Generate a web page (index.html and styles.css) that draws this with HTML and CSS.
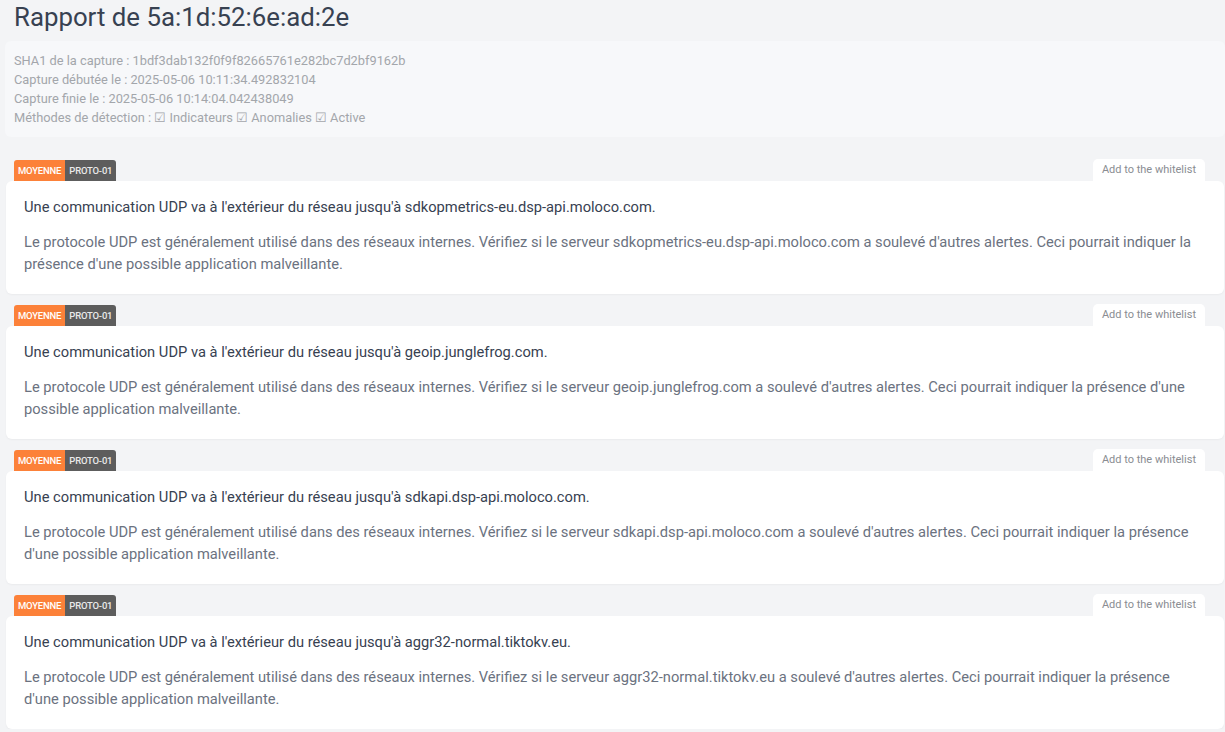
FILE: index.html
```html
<!DOCTYPE html>
<html lang="fr">
<head>
<meta charset="utf-8">
<title>Rapport</title>
<link rel="stylesheet" href="styles.css">
</head>
<body>
<div class="page">
  <h1 class="title">Rapport de 5a:1d:52:6e:ad:2e</h1>
  <div class="info">
    <div>SHA1 de la capture : 1bdf3dab132f0f9f82665761e282bc7d2bf9162b</div>
    <div>Capture débutée le : 2025-05-06 10:11:34.492832104</div>
    <div>Capture finie le : 2025-05-06 10:14:04.042438049</div>
    <div>Méthodes de détection : ☑ Indicateurs ☑ Anomalies ☑ Active</div>
  </div>

  <div class="alert">
    <div class="alert-head">
      <div class="tags"><span class="tag tag-level">MOYENNE</span><span class="tag tag-id">PROTO-01</span></div>
      <button class="wl">Add to the whitelist</button>
    </div>
    <div class="card">
      <p class="card-title">Une communication UDP va à l'extérieur du réseau jusqu'à sdkopmetrics-eu.dsp-api.moloco.com.</p>
      <p class="card-desc">Le protocole UDP est généralement utilisé dans des réseaux internes. Vérifiez si le serveur sdkopmetrics-eu.dsp-api.moloco.com a soulevé d'autres alertes. Ceci pourrait indiquer la présence d'une possible application malveillante.</p>
    </div>
  </div>

  <div class="alert">
    <div class="alert-head">
      <div class="tags"><span class="tag tag-level">MOYENNE</span><span class="tag tag-id">PROTO-01</span></div>
      <button class="wl">Add to the whitelist</button>
    </div>
    <div class="card">
      <p class="card-title">Une communication UDP va à l'extérieur du réseau jusqu'à geoip.junglefrog.com.</p>
      <p class="card-desc">Le protocole UDP est généralement utilisé dans des réseaux internes. Vérifiez si le serveur geoip.junglefrog.com a soulevé d'autres alertes. Ceci pourrait indiquer la présence d'une possible application malveillante.</p>
    </div>
  </div>

  <div class="alert">
    <div class="alert-head">
      <div class="tags"><span class="tag tag-level">MOYENNE</span><span class="tag tag-id">PROTO-01</span></div>
      <button class="wl">Add to the whitelist</button>
    </div>
    <div class="card">
      <p class="card-title">Une communication UDP va à l'extérieur du réseau jusqu'à sdkapi.dsp-api.moloco.com.</p>
      <p class="card-desc">Le protocole UDP est généralement utilisé dans des réseaux internes. Vérifiez si le serveur sdkapi.dsp-api.moloco.com a soulevé d'autres alertes. Ceci pourrait indiquer la présence d'une possible application malveillante.</p>
    </div>
  </div>

  <div class="alert">
    <div class="alert-head">
      <div class="tags"><span class="tag tag-level">MOYENNE</span><span class="tag tag-id">PROTO-01</span></div>
      <button class="wl">Add to the whitelist</button>
    </div>
    <div class="card">
      <p class="card-title">Une communication UDP va à l'extérieur du réseau jusqu'à aggr32-normal.tiktokv.eu.</p>
      <p class="card-desc">Le protocole UDP est généralement utilisé dans des réseaux internes. Vérifiez si le serveur aggr32-normal.tiktokv.eu a soulevé d'autres alertes. Ceci pourrait indiquer la présence d'une possible application malveillante.</p>
    </div>
  </div>
</div>
</body>
</html>
```

FILE: styles.css
```css
html, body {
  margin: 0;
  padding: 0;
  background: #f3f4f6;
  font-family: Roboto, "Liberation Sans", sans-serif;
}

.page {
  padding: 0 1px 0 6px;
}

.title {
  margin: 0;
  padding: 2px 0 0 8px;
  height: 39px;
  font-size: 25.8px;
  font-weight: 400;
  line-height: 30px;
  color: #374151;
}

.info {
  margin: 0 -1px 0 -1px;
  padding: 9.5px 9px 10.5px 9px;
  background: #f7f8fa;
  border-radius: 6px;
  font-size: 12.8px;
  line-height: 19px;
  color: #a3a6ab;
}

.alert {
  margin-top: 22px;
}
.alert + .alert {
  margin-top: 10px;
}

.alert-head {
  display: flex;
  justify-content: space-between;
  align-items: flex-end;
  padding: 0 19px 0 8px;
}

.tags {
  display: flex;
  border-radius: 3px 3px 0 0;
  overflow: hidden;
}

.tag {
  font-size: 9.5px;
  font-weight: 500;
  line-height: 21px;
  height: 21px;
  padding: 0 4px;
  color: #fff;
  letter-spacing: -0.2px;
}
.tag-level { background: #fc8139; }
.tag-id { background: #5d5d5d; color: #eaeaea; }

.wl {
  border: none;
  background: #fff;
  border-radius: 5px 5px 0 0;
  font-family: Roboto, "Liberation Sans", sans-serif;
  font-size: 11px;
  color: #8a8d92;
  padding: 0 9px;
  height: 22px;
  line-height: 22px;
  cursor: pointer;
}

.card {
  background: #fff;
  border-radius: 6px;
  padding: 16px 18px 19px 18px;
  box-shadow: 0 1px 2px rgba(0,0,0,0.04);
}

.card-title {
  margin: 0 0 14px 0;
  font-size: 14.7px;
  line-height: 20px;
  color: #374151;
}

.card-desc {
  margin: 0;
  font-size: 14.7px;
  line-height: 22px;
  color: #6b7280;
}
```
